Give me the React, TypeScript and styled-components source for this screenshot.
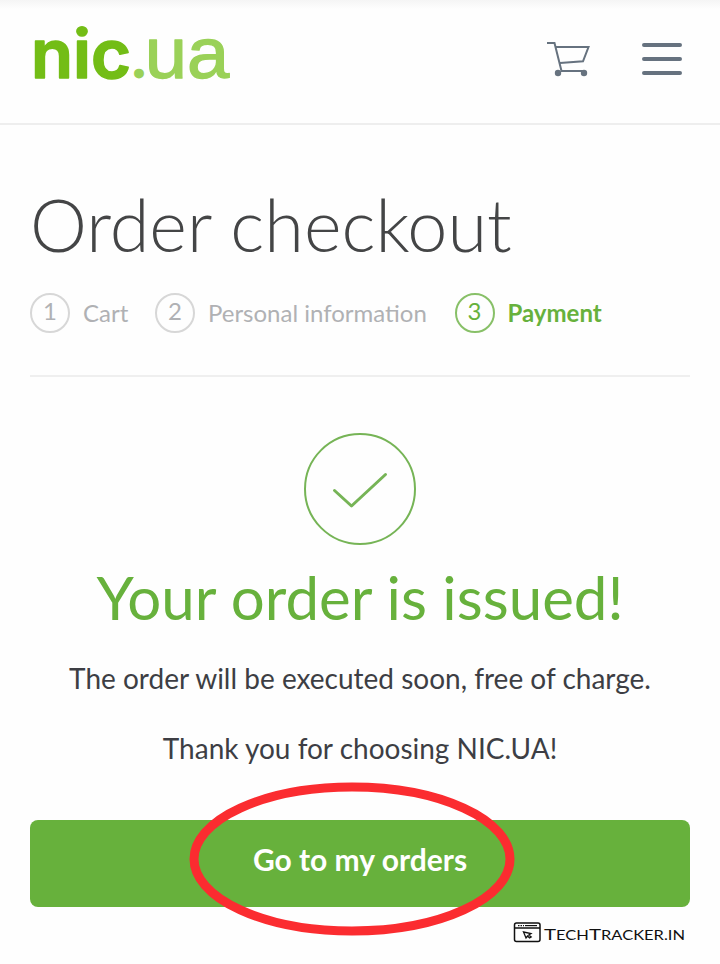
import React from "react";
import styled, { createGlobalStyle } from "styled-components";

const GlobalStyle = createGlobalStyle`
  * { box-sizing: border-box; }
  body { margin: 0; background: #fefefe; font-family: Lato, "Liberation Sans", sans-serif; }
  h1, h2, p, ol { margin: 0; padding: 0; }
  svg { display: block; }
`;

const GREEN = "#67b13c";

const Page = styled.div`
  position: relative;
  width: 720px;
  height: 964px;
  overflow: hidden;
  background: #fefefe;
`;

const Header = styled.header`
  display: flex;
  align-items: flex-start;
  height: 125px;
  border-bottom: 2px solid #eeeeee;
  background: linear-gradient(#f5f5f5, #fefefe 9px);
`;

const Logo = styled.svg`
  width: 240px;
  height: 100px;
  font-family: Inter, sans-serif;
`;

const Actions = styled.div`
  display: flex;
  align-items: center;
  gap: 51px;
  margin: 39px 37px 0 auto;
`;

const IconButton = styled.button`
  padding: 0;
  border: 0;
  background: none;
`;

const Main = styled.main`
  padding: 59px 30px 0;
`;

const Title = styled.h1`
  height: 83px;
  line-height: 80px;
  font-size: 72px;
  font-weight: 300;
  color: #444546;
  white-space: nowrap;
`;

const Steps = styled.ol`
  display: flex;
  height: 110px;
  padding-top: 25px;
  border-bottom: 2px solid #efefef;
  list-style: none;
`;

const Step = styled.li<{ $active?: boolean; $width: number }>`
  display: flex;
  gap: 13px;
  width: ${(p) => p.$width}px;
  flex: none;
  white-space: nowrap;
  font-size: 24px;
  line-height: 42px;
  font-weight: ${(p) => (p.$active ? 700 : 400)};
  color: ${(p) => (p.$active ? GREEN : "#b0b1b4")};
`;

const StepNumber = styled.span<{ $active?: boolean }>`
  width: 40px;
  height: 40px;
  margin-top: 1px;
  border: 2px solid ${(p) => (p.$active ? "#88c068" : "#d7d7d7")};
  border-radius: 50%;
  text-align: center;
  font-weight: 400;
  line-height: 32px;
`;

const Result = styled.section`
  display: flex;
  flex-direction: column;
  align-items: center;
  padding-top: 56px;
  white-space: nowrap;
`;

const ResultTitle = styled.h2`
  margin-top: 16px;
  height: 72px;
  line-height: 72px;
  font-size: 60px;
  font-weight: 400;
  color: ${GREEN};
`;

const Message = styled.p`
  margin-top: 26px;
  height: 44px;
  line-height: 44px;
  font-size: 28px;
  color: #3d3e44;

  h2 + & {
    margin-top: 23px;
  }
`;

const OrdersButton = styled.button`
  width: 660px;
  height: 87px;
  margin-top: 50px;
  padding: 0 0 9px;
  border: 0;
  border-radius: 8px;
  background: ${GREEN};
  color: #fff;
  font: 700 30px Lato, sans-serif;
`;

const Highlight = styled.svg`
  position: absolute;
  left: 185px;
  top: 778px;
  pointer-events: none;
`;

const Watermark = styled.svg`
  position: absolute;
  left: 512px;
  top: 920px;
`;

const CartIcon = () => (
  <svg width="45" height="40" viewBox="0 0 45 40" fill="none" stroke="#66727f" strokeWidth="2">
    <path d="M2 4H9.5L16.5 32H39M10.5 8H43.5L38 22.3L15 24" />
    <circle cx="13" cy="34" r="3.2" fill="#66727f" stroke="none" />
    <circle cx="39" cy="34" r="3.2" fill="#66727f" stroke="none" />
  </svg>
);

const MenuIcon = () => (
  <svg width="42" height="40" viewBox="0 0 42 40" stroke="#66727f" strokeWidth="4" strokeLinecap="round">
    <path d="M3 6H39M3 20H39M3 34H39" />
  </svg>
);

const CheckIcon = () => (
  <svg width="112" height="112" viewBox="0 0 112 112" fill="none" stroke="#76b456">
    <circle cx="56" cy="56" r="55" strokeWidth="2" />
    <path d="M30.5 57.5L47.5 73L81.5 41.5" strokeWidth="3" strokeLinecap="round" strokeLinejoin="round" />
  </svg>
);

const steps = [
  { label: "Cart", width: 125 },
  { label: "Personal information", width: 299.5 },
  { label: "Payment", width: 160, active: true },
];

export default function App() {
  return (
    <Page>
      <GlobalStyle />
      <Header>
        <Logo viewBox="0 0 240 100" role="img" aria-label="nic.ua">
          <text x="31" y="78" fontSize="67" fontWeight="600" fill="#73bd16" stroke="#73bd16" strokeWidth="1.6" strokeLinejoin="round" textLength="100" lengthAdjust="spacingAndGlyphs">nic</text>
          <text x="132" y="77" fontSize="44" fontWeight="600" fill="#9ad158" stroke="#9ad158" strokeWidth="3">.</text>
          <text x="144.8" y="78" fontSize="71.5" fontFamily="Liberation Sans, sans-serif" fill="#9ad158" stroke="#9ad158" strokeWidth="1.3" strokeLinejoin="round" textLength="84.5" lengthAdjust="spacingAndGlyphs">ua</text>
        </Logo>
        <Actions>
          <IconButton aria-label="Cart"><CartIcon /></IconButton>
          <IconButton aria-label="Menu"><MenuIcon /></IconButton>
        </Actions>
      </Header>
      <Main>
        <Title>Order checkout</Title>
        <Steps>
          {steps.map((s, i) => (
            <Step key={s.label} $active={s.active} $width={s.width}>
              <StepNumber $active={s.active}>{i + 1}</StepNumber>
              {s.label}
            </Step>
          ))}
        </Steps>
        <Result>
          <CheckIcon />
          <ResultTitle>Your order is issued!</ResultTitle>
          <Message>The order will be executed soon, free of charge.</Message>
          <Message>Thank you for choosing NIC.UA!</Message>
          <OrdersButton>Go to my orders</OrdersButton>
        </Result>
      </Main>
      <Highlight width="334" height="162" viewBox="0 0 334 162">
        <ellipse cx="167" cy="81" rx="158" ry="72" fill="none" stroke="#fb2c30" strokeWidth="9" />
      </Highlight>
      <Watermark width="180" height="30" viewBox="0 0 180 30">
        <g fill="none" stroke="#111" strokeWidth="1.5">
          <rect x="2.5" y="3" width="25.5" height="18.5" rx="2" />
          <path d="M2.5 8H28" />
          <path d="M6 5.6H12" strokeDasharray="1.5 1" strokeWidth="1.2" />
          <path d="M13 5.6H25" strokeWidth="1.2" />
          <path d="M11.5 12L19 13.5L16.8 15L19.2 17L17.6 18L15.5 16L14 18Z" strokeWidth="1.3" />
        </g>
        <text x="32" y="20" fontFamily="Lato, sans-serif" fontSize="15.5" fill="#111" textLength="141" lengthAdjust="spacingAndGlyphs">
          T<tspan fontSize="12.5">ECH</tspan>T<tspan fontSize="12.5">RACKER.IN</tspan>
        </text>
      </Watermark>
    </Page>
  );
}
